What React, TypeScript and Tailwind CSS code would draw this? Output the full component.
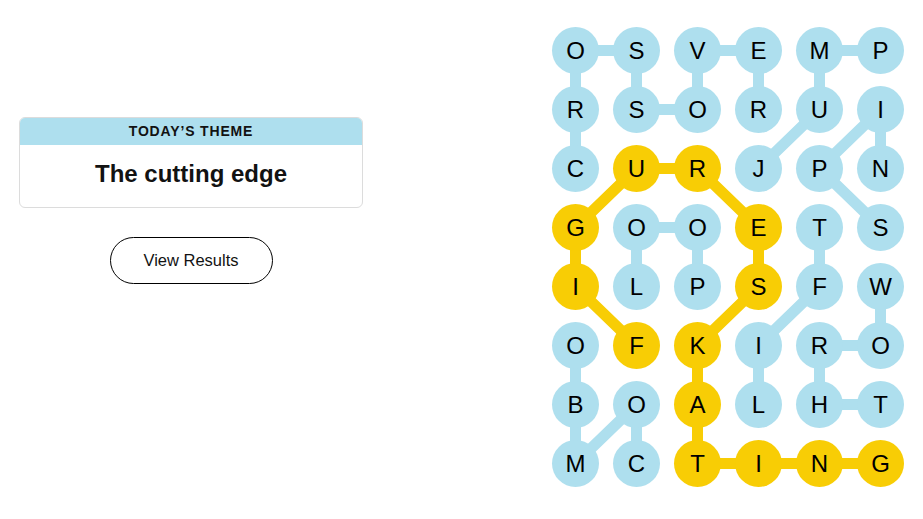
import React from "react";

const grid = [
  "OSVEMP",
  "RSORUI",
  "CURJPN",
  "GOOETS",
  "ILPSFW",
  "OFKIRO",
  "BOALHT",
  "MCTING",
];

// words found, as [row, col] paths
const words: number[][][] = [
  [[2, 0], [1, 0], [0, 0], [0, 1], [1, 1], [1, 2], [0, 2], [0, 3], [1, 3]],
  [[2, 3], [1, 4], [0, 4], [0, 5]],
  [[3, 5], [2, 4], [1, 5], [2, 5]],
  [[4, 1], [3, 1], [3, 2], [4, 2]],
  [[6, 3], [5, 3], [4, 4], [3, 4]],
  [[6, 5], [6, 4], [5, 4], [5, 5], [4, 5]],
  [[7, 1], [6, 1], [7, 0], [6, 0], [5, 0]],
];

const spangram: number[][] = [
  [5, 1], [4, 0], [3, 0], [2, 1], [2, 2], [3, 3], [4, 3], [5, 2], [6, 2], [7, 2], [7, 3], [7, 4], [7, 5],
];

const BLUE = "#aedfee";
const YELLOW = "#f8cd05";

const cx = (c: number) => 23.5 + c * 61;
const cy = (r: number) => 23.5 + r * 59;

const spanSet = new Set(spangram.map(([r, c]) => `${r}-${c}`));

function Path({ pts, color }: { pts: number[][]; color: string }) {
  return (
    <polyline
      points={pts.map(([r, c]) => `${cx(c)},${cy(r)}`).join(" ")}
      fill="none"
      stroke={color}
      strokeWidth={11}
      strokeLinejoin="round"
    />
  );
}

export default function App() {
  return (
    <div className="w-[923px] h-[519px] bg-white flex pl-[19px] overflow-hidden" style={{ fontFamily: '"Liberation Sans", Arial, sans-serif' }}>
      <div className="w-[344px] pt-[117px] flex flex-col items-center">
        <div className="w-full rounded-md border border-[#dcdcdc] overflow-hidden">
          <div className="h-[27px] bg-[#aedfee] flex items-center justify-center text-[14px] font-semibold tracking-[0.06em] text-[#121212]">
            TODAY’S THEME
          </div>
          <div className="h-[62px] flex items-center justify-center pb-[4px] text-[24px] font-bold text-[#121212]">
            The cutting edge
          </div>
        </div>
        <button className="mt-[29px] w-[163px] h-[47px] rounded-full border border-black text-[16.5px] text-[#121212] bg-white">
          View Results
        </button>
      </div>
      <div className="ml-[189px] mt-[27px] relative w-[352px] h-[460px]">
        <svg className="absolute inset-0" width={352} height={460}>
          {words.map((w, i) => (
            <Path key={i} pts={w} color={BLUE} />
          ))}
          <Path pts={spangram} color={YELLOW} />
        </svg>
        <div className="relative grid grid-cols-[repeat(6,47px)] grid-rows-[repeat(8,47px)] gap-x-[14px] gap-y-[12px]">
          {grid.map((row, r) =>
            row.split("").map((ch, c) => (
              <div
                key={`${r}-${c}`}
                className={`w-[47px] h-[47px] rounded-full flex items-center justify-center text-[24px] text-black ${
                  spanSet.has(`${r}-${c}`) ? "bg-[#f8cd05]" : "bg-[#aedfee]"
                }`}
              >
                {ch}
              </div>
            ))
          )}
        </div>
      </div>
    </div>
  );
}
